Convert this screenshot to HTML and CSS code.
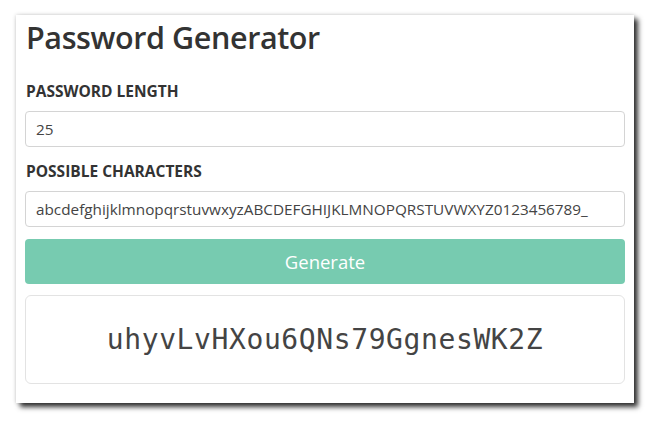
FILE: index.html
```html
<!DOCTYPE html>
<html>
<head>
<meta charset="utf-8">
<link rel="stylesheet" href="styles.css">
</head>
<body>
<div class="card">
  <h1 class="title">Password Generator</h1>
  <label class="label first">PASSWORD LENGTH</label>
  <div class="input">25</div>
  <label class="label">POSSIBLE CHARACTERS</label>
  <div class="input">abcdefghijklmnopqrstuvwxyzABCDEFGHIJKLMNOPQRSTUVWXYZ0123456789_</div>
  <div class="button">Generate</div>
  <div class="result">uhyvLvHXou6QNs79GgnesWK2Z</div>
</div>
</body>
</html>
```
FILE: styles.css
```css
html, body {
  margin: 0;
  padding: 0;
  background: #fff;
}
body {
  padding: 15px 17px 18px 16px;
  font-family: "Open Sans", "Noto Sans", sans-serif;
  color: #333;
}
.card {
  width: 618px;
  box-sizing: border-box;
  background: #fff;
  padding: 4px 9px 19px;
  box-shadow: 4px 4px 5px rgba(0,0,0,0.8), 0 0 4px rgba(0,0,0,0.2);
  display: flex;
  flex-direction: column;
}
.title {
  margin: 0 0 0 1px;
  font-size: 30.5px;
  font-weight: 600;
  letter-spacing: -0.4px;
  line-height: 36px;
  color: #333;
}
.label {
  display: block;
  margin: 14px 0 0 1px;
  font-size: 15.5px;
  font-weight: 700;
  line-height: 20px;
}
.label.first { margin-top: 26px; }
.label + .input { margin-top: 10px; }
.input {
  height: 36px;
  box-sizing: border-box;
  border: 1px solid #d4d4d4;
  border-radius: 4px;
  padding: 0 10px;
  font-size: 15.3px;
  line-height: 34px;
  color: #444;
  white-space: nowrap;
  overflow: hidden;
}
.button {
  margin-top: 12px;
  height: 45px;
  background: #77cbb0;
  border-radius: 4px;
  color: #fff;
  font-size: 18.5px;
  line-height: 45px;
  text-align: center;
}
.result {
  margin-top: 11px;
  height: 89px;
  box-sizing: border-box;
  border: 1px solid #e3e3e3;
  border-radius: 6px;
  font-family: "DejaVu Sans Mono", monospace;
  font-size: 28px;
  letter-spacing: 0.6px;
  line-height: 87px;
  text-align: center;
  color: #444;
}
```
